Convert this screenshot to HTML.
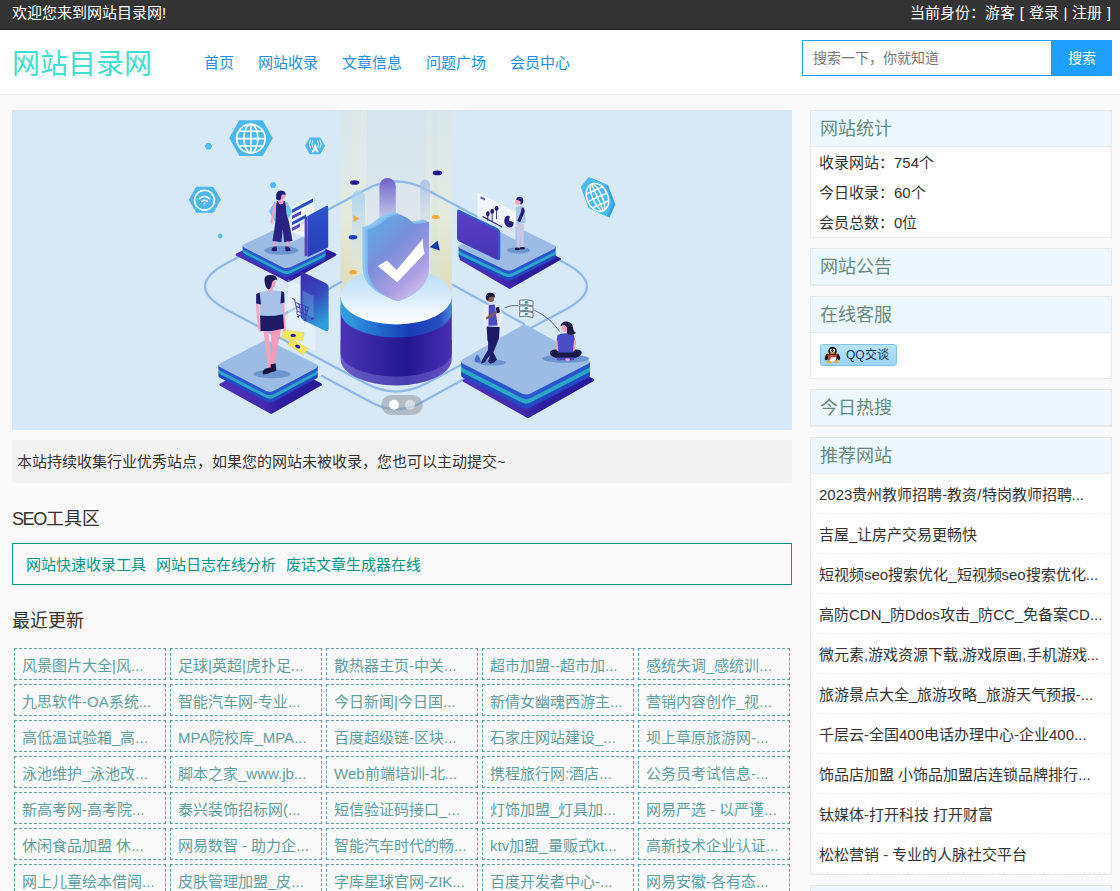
<!DOCTYPE html>
<html lang="zh-CN">
<head>
<meta charset="utf-8">
<title>网站目录网</title>
<style>
*{margin:0;padding:0;box-sizing:border-box;}
html,body{width:1120px;height:891px;overflow:hidden;}
body{font-family:"Liberation Sans",sans-serif;background:#fafafa;color:#333;font-size:15px;position:relative;}
a{text-decoration:none;color:inherit;}
ul{list-style:none;}
.topbar{position:absolute;left:0;top:0;width:1120px;height:30px;background:#333;border-bottom:1px solid #222;color:#fff;font-size:15px;line-height:26px;}
.topbar .l{position:absolute;left:12px;top:0;}
.topbar .r{position:absolute;right:9px;top:0;white-space:nowrap;word-spacing:0.6px;}
.header{position:absolute;left:0;top:30px;width:1120px;height:65px;background:#fff;border-bottom:1px solid #e8e8e8;}
.logo{position:absolute;left:12px;top:17px;font-size:28px;line-height:36px;color:#40e0d0;white-space:nowrap;}
.nav{position:absolute;left:192px;top:0;height:64px;white-space:nowrap;}
.nav a{display:inline-block;float:left;padding:0 12px;font-size:15px;line-height:66px;color:#2290e4;}
.search{position:absolute;left:802px;top:10px;width:310px;height:36px;}
.search .inp{position:absolute;left:0;top:0;width:250px;height:36px;border:1px solid #1e9fff;border-right:0;background:#fff;color:#777;font-size:14px;line-height:34px;padding-left:10px;}
.search .btn{position:absolute;left:249px;top:0;width:61px;height:36px;background:#1e9fff;color:#fff;font-size:14px;line-height:36px;text-align:center;}
.banner{position:absolute;left:12px;top:110px;width:780px;height:320px;background:#d7e8f7;overflow:hidden;}
.notice{position:absolute;left:12px;top:440px;width:780px;height:43px;background:#f2f2f2;border-radius:2px;font-size:15px;line-height:43px;padding-left:5px;color:#333;}
.h3{position:absolute;left:12px;font-size:18px;line-height:24px;color:#333;white-space:nowrap;}
.seo{position:absolute;left:12px;top:543px;width:780px;height:42px;border:1px solid #009688;font-size:15px;line-height:41px;color:#009688;padding-left:13px;white-space:nowrap;}
.seo a{margin-right:6px;}
.grid{position:absolute;left:12px;top:646px;width:784px;}
.grid a{float:left;width:152px;height:32px;margin:2px;border:1px dashed #5f9ea0;color:#5f9ea0;font-size:15px;line-height:33px;padding:0 7px;white-space:nowrap;overflow:hidden;}
.card{position:absolute;overflow:hidden;left:810px;width:302px;border:1px solid #e9e9e9;background:#fff;}
.card .hd{height:36px;background:#edf8fe;border-bottom:1px solid #e4ebef;font-size:18px;line-height:36px;color:#688a7c;padding-left:9px;}
.card .li{font-size:15px;line-height:30px;padding-left:8px;color:#333;white-space:nowrap;}
.card .rl{height:40px;line-height:42px;font-size:15px;padding-left:8px;color:#333;white-space:nowrap;overflow:hidden;border-bottom:1px dashed #eee;}
</style>
</head>
<body>
<div class="topbar"><span class="l">欢迎您来到网站目录网!</span><span class="r">当前身份：游客 [ 登录 | 注册 ]</span></div>
<div class="header">
  <div class="logo">网站目录网</div>
  <div class="nav"><a>首页</a><a>网站收录</a><a>文章信息</a><a>问题广场</a><a>会员中心</a></div>
  <div class="search"><div class="inp">搜索一下，你就知道</div><div class="btn">搜索</div></div>
</div>
<div class="banner" id="banner"><svg width="780" height="320" viewBox="12 110 780 320" style="display:block">
<defs>
<linearGradient id="beam" x1="0" y1="0" x2="0" y2="1"><stop offset="0" stop-color="#d9e7ec"/><stop offset="0.35" stop-color="#dfe9e8"/><stop offset="0.55" stop-color="#e4ebda"/><stop offset="0.78" stop-color="#e0e1c8"/><stop offset="1" stop-color="#dddcc0"/></linearGradient>
<linearGradient id="beam2" x1="0" y1="0" x2="0" y2="1"><stop offset="0" stop-color="#d5e5ee"/><stop offset="0.5" stop-color="#dce6ec"/><stop offset="1" stop-color="#e3e9ea"/></linearGradient>
<linearGradient id="pillP" x1="0" y1="0" x2="0" y2="1"><stop offset="0" stop-color="#6a5cc8" stop-opacity="0.95"/><stop offset="0.45" stop-color="#8f86d8" stop-opacity="0.7"/><stop offset="1" stop-color="#b9b4e6" stop-opacity="0.12"/></linearGradient>
<linearGradient id="pillB" x1="0" y1="0" x2="0" y2="1"><stop offset="0" stop-color="#a2cff0" stop-opacity="0.8"/><stop offset="1" stop-color="#c6dff5" stop-opacity="0.15"/></linearGradient>
<linearGradient id="pillG" x1="0" y1="0" x2="0" y2="1"><stop offset="0" stop-color="#a2bce3" stop-opacity="0.8"/><stop offset="1" stop-color="#cfdcf0" stop-opacity="0.05"/></linearGradient>
<linearGradient id="cylTop" x1="0" y1="0" x2="0" y2="1"><stop offset="0" stop-color="#b6dbf6"/><stop offset="0.45" stop-color="#d3e9fa"/><stop offset="0.8" stop-color="#f1f8fe"/><stop offset="1" stop-color="#ffffff"/></linearGradient>
<linearGradient id="cylBand" x1="0" y1="0" x2="1" y2="0"><stop offset="0" stop-color="#35a2e0"/><stop offset="0.3" stop-color="#2272d0"/><stop offset="0.62" stop-color="#183cb4"/><stop offset="0.9" stop-color="#2a4fc0"/><stop offset="1" stop-color="#4a8ad8"/></linearGradient>
<linearGradient id="cylBody" x1="0" y1="0" x2="1" y2="0"><stop offset="0" stop-color="#4a34b6"/><stop offset="0.6" stop-color="#23178f"/><stop offset="1" stop-color="#4a2fb4"/></linearGradient>
<linearGradient id="cylBase" x1="0" y1="0" x2="1" y2="0"><stop offset="0" stop-color="#6a5cc8"/><stop offset="0.6" stop-color="#4a3eb0"/><stop offset="1" stop-color="#6450c4"/></linearGradient>
<linearGradient id="shield" x1="0.1" y1="0" x2="0.75" y2="1"><stop offset="0" stop-color="#5cade4"/><stop offset="0.42" stop-color="#7a8ed9"/><stop offset="0.8" stop-color="#b0a0e4"/><stop offset="1" stop-color="#cfc2f0"/></linearGradient>
<linearGradient id="scrL" x1="0" y1="0" x2="0" y2="1"><stop offset="0" stop-color="#2b53cc"/><stop offset="1" stop-color="#2a3db8"/></linearGradient>
<linearGradient id="scrR" x1="0" y1="0" x2="0" y2="1"><stop offset="0" stop-color="#5a3fc2"/><stop offset="1" stop-color="#4636b4"/></linearGradient>
<linearGradient id="phone" x1="0" y1="0" x2="0.3" y2="1"><stop offset="0" stop-color="#3d29aa"/><stop offset="0.5" stop-color="#3648bc"/><stop offset="1" stop-color="#2f9ad6"/></linearGradient>
<linearGradient id="slabG" x1="0" y1="0" x2="1" y2="0"><stop offset="0" stop-color="#4f31b8"/><stop offset="0.45" stop-color="#4229ae"/><stop offset="0.6" stop-color="#2e1da0"/><stop offset="1" stop-color="#2a1a9a"/></linearGradient>
</defs>
<rect x="12" y="110" width="780" height="320" fill="#d7e8f7"/>
<rect x="340.5" y="110" width="111.5" height="195" fill="url(#beam)"/>
<rect x="367" y="110" width="58" height="195" fill="url(#beam2)"/>
<rect x="352" y="110" width="12" height="195" fill="#e9efe2" opacity="0.3"/>
<rect x="433" y="110" width="5" height="195" fill="#d2e6dc" opacity="0.4"/>
<rect x="362" y="110" width="5" height="195" fill="#e4ecf0" opacity="0.45"/>
<rect x="428" y="110" width="3" height="195" fill="#e4ecf0" opacity="0.4"/>
<path d="M227.2,309.9 Q183.0,286.5 227.2,263.1 L366.0,189.4 Q396.0,173.5 426.0,189.4 L564.8,263.1 Q609.0,286.5 564.8,309.9 L426.0,383.6 Q396.0,399.5 366.0,383.6 Z" fill="none" stroke="#8fb9e9" stroke-width="2.3" stroke-linecap="round"/>
<path d="M322,376 L372,402.8 Q398,416.5 424,401 L466,378" fill="none" stroke="#8fb9e9" stroke-width="2.3" stroke-linecap="round"/>
<path d="M262,327 L341,282" fill="none" stroke="#8fb9e9" stroke-width="2.3" stroke-linecap="round"/>
<path d="M453,285 L524,324" fill="none" stroke="#8fb9e9" stroke-width="2.3" stroke-linecap="round"/>
<path d="M352.0,262.0 V197.0 A6.5,6.5 0 0 1 365.0,197.0 V262.0 Z" fill="url(#pillB)"/>
<path d="M379.4,236.0 V186.2 A8.2,8.2 0 0 1 395.8,186.2 V236.0 Z" fill="url(#pillP)"/>
<path d="M420.2,238.0 V184.4 A4.9,4.9 0 0 1 430.0,184.4 V238.0 Z" fill="url(#pillG)"/>
<ellipse cx="354.6" cy="182.5" rx="4.6" ry="2.3" fill="#1f1592"/>
<ellipse cx="437.3" cy="172.9" rx="4.6" ry="2.3" fill="#1f1592"/>
<ellipse cx="353" cy="237.3" rx="4.3" ry="2.2" fill="#1c3fb2"/>
<ellipse cx="435.8" cy="217" rx="3.8" ry="2.1" fill="#f7a93a"/>
<ellipse cx="353" cy="272.2" rx="3.8" ry="2.1" fill="#f7a93a"/>
<polygon points="353.2,215.3 359.6,218.4 353.8,222" fill="#f5a445"/>
<polygon points="429.6,247.2 437.6,240.4 439.9,250.6" fill="#183cae"/>
<polygon points="236.8,254.6 284.0,231.0 335.2,254.6 288.5,281.0" fill="url(#slabG)" stroke="url(#slabG)" stroke-width="2.4" stroke-linejoin="round"/>
<path d="M242.6,251.3 L242.6,254.6 Q242.6,255.7 244.9,256.9 L281.9,275.7 Q286.4,278.0 290.9,275.9 L323.4,260.4 Q325.6,259.4 325.7,258.3 L325.7,255.0 Z" fill="#2447c2"/>
<path d="M242.6,248.5 L242.6,251.6 Q242.6,252.7 244.9,253.9 L281.9,272.7 Q286.4,275.0 290.9,272.9 L323.4,257.4 Q325.6,256.4 325.7,255.3 L325.7,252.2 Z" fill="#2ba7c8"/>
<path d="M242.6,245.5 L242.6,248.8 Q242.6,249.9 244.9,251.1 L281.9,269.9 Q286.4,272.2 290.9,270.1 L323.4,254.6 Q325.6,253.6 325.7,252.5 L325.7,249.2 Z" fill="#2a55cc"/>
<path d="M244.9,243.7 Q240.4,245.8 244.9,248.1 L281.9,266.9 Q286.4,269.2 290.9,267.1 L323.4,251.6 Q327.9,249.5 323.4,247.3 L286.5,228.7 Q282.0,226.5 277.5,228.6 Z" fill="#9cbce5"/>
<polygon points="290.5,207.5 313.5,195.5 313.5,231 290.5,243" fill="#ffffff" opacity="0.55"/>
<polygon points="292.0,209.5 313.0,198.6 313.0,202.0 292.0,212.9" fill="#2a4fc4"/>
<polygon points="292.0,215.7 301.0,211.0 301.0,214.4 292.0,219.1" fill="#5a44c0"/>
<polygon points="292.0,221.9 306.0,214.6 306.0,218.0 292.0,225.3" fill="#2a4fc4"/>
<polygon points="292.0,227.7 300.0,223.5 300.0,226.9 292.0,231.1" fill="#5a44c0"/>
<polygon points="304.6,217.5 307.6,216 307.6,255.5 304.6,256.5" fill="#5a3fc0"/>
<path d="M307.6,216 L325.5,206.2 Q328.2,205 328.2,208 L328.2,247.5 L307.6,257 Z" fill="url(#scrL)"/>
<ellipse cx="281.3" cy="250.3" rx="17" ry="4.4" fill="#6e95cf"/>
<polygon points="269,211.5 274.6,201.7 286.8,201.7 292.4,211.5 286.8,221.3 274.6,221.3" fill="#71c2f1"/>
<path d="M275.8,203.2 L273.4,213 L271.4,222.8" stroke="#f5a3bd" stroke-width="2.1" fill="none" stroke-linecap="round"/>
<rect x="279.6" y="197.6" width="2.8" height="4.4" fill="#f5a3bd"/>
<path d="M275,203.6 Q275.4,201 278,200.8 L284.2,200.8 Q286.2,201 286.6,203.6 L286.2,207 L275.4,207 Z" fill="#f5a3bd"/>
<path d="M276.9,201 L278.2,201 L279.2,204 L282.8,204 L283.7,201 L285,201 L285.8,206 L286.5,214 L289.2,223 L292.5,241 L284.2,242.2 L282.8,229 L281.4,242.2 L272.5,241 L275.3,223 L276,214 L276.1,206 Z" fill="#292382"/>
<rect x="274.3" y="241.5" width="2.2" height="6" fill="#f5a3bd"/><rect x="286.4" y="241.5" width="2.2" height="6" fill="#f5a3bd"/>
<path d="M271.4,250.6 Q271.4,247.6 274,246.4 L276.8,246.4 L277,250.8 Q274,252 271.4,250.6 Z" fill="#221c78"/><path d="M285.2,246.4 L288,246.4 Q290.6,247.8 290.8,250.6 Q288,252 285.4,250.8 Z" fill="#221c78"/>
<circle cx="282.4" cy="196.4" r="2.9" fill="#f5a3bd"/>
<path d="M276.2,198.4 Q275.2,190.6 281,190.5 Q286.2,190.7 285.5,195.4 Q283,193.6 281.3,195.8 Q281.6,199.8 279,200.5 Q276.7,200.4 276.2,198.4 Z" fill="#221c78"/>
<polygon points="460.6,259.0 510.0,234.0 559.6,259.0 509.6,287.6" fill="url(#slabG)" stroke="url(#slabG)" stroke-width="2.4" stroke-linejoin="round"/>
<path d="M458.6,252.9 L458.6,256.6 Q458.7,257.7 460.9,258.8 L504.3,279.4 Q508.8,281.6 513.3,279.4 L553.4,259.2 Q555.7,258.1 555.7,257.0 L555.7,253.3 Z" fill="#2447c2"/>
<path d="M458.6,249.7 L458.6,253.2 Q458.7,254.3 460.9,255.4 L504.3,276.0 Q508.8,278.2 513.3,276.0 L553.4,255.8 Q555.7,254.7 555.7,253.6 L555.7,250.1 Z" fill="#2ba7c8"/>
<path d="M458.6,246.3 L458.6,250.0 Q458.7,251.1 460.9,252.2 L504.3,272.8 Q508.8,275.0 513.3,272.8 L553.4,252.6 Q555.7,251.5 555.7,250.4 L555.7,246.7 Z" fill="#2a55cc"/>
<path d="M460.9,244.3 Q456.4,246.6 460.9,248.8 L504.3,269.4 Q508.8,271.6 513.3,269.4 L553.4,249.2 Q557.9,247.0 553.4,244.8 L510.0,223.7 Q505.5,221.5 501.0,223.8 Z" fill="#9cbce5"/>
<polygon points="477.5,192 515.5,211.8 515.5,240 477.5,220" fill="#ffffff" opacity="0.62"/>
<rect x="481" y="196.2" width="5" height="2.2" fill="#4a4aa0" opacity="0.8" transform="rotate(27 481 196.2)"/>
<ellipse cx="487.8" cy="213.8" rx="1.9" ry="2.5" fill="#221c78"/>
<path d="M487.8,215.8 V220.8" stroke="#221c78" stroke-width="0.9"/>
<ellipse cx="492.2" cy="211.2" rx="1.9" ry="2.5" fill="#221c78"/>
<path d="M492.2,213.2 V222.2" stroke="#221c78" stroke-width="0.9"/>
<ellipse cx="496.6" cy="208.2" rx="1.9" ry="2.5" fill="#221c78"/>
<path d="M496.6,210.2 V219.2" stroke="#221c78" stroke-width="0.9"/>
<path d="M482.5,216.5 L502,227" stroke="#221c78" stroke-width="1.2"/>
<path d="M504.2,221 Q505,214.5 509.8,216.2 L509,220.4 L513.6,222.2 Q513.8,228 509,227.4 Q504.6,226 504.2,221 Z" fill="#221c78"/>
<path d="M459.2,209.8 L497.6,228.3 Q500.3,229.8 500.3,232.6 L500.3,257.6 Q500.3,261.2 497.4,259.8 L459.2,241.2 Q457.2,240.2 457.2,238 L457.2,211 Q457.2,208.8 459.2,209.8 Z" fill="#2a5fd0"/>
<path d="M458.6,211.8 L496.2,230 Q498.6,231.2 498.6,234 L498.6,257.2 Q498.6,260.4 496,259.2 L458.6,241 Q457.2,240.2 457.2,238.6 L457.2,212.6 Q457.2,211 458.6,211.8 Z" fill="url(#scrR)"/>
<ellipse cx="518.6" cy="250.2" rx="11.6" ry="3.2" fill="#6e95cf"/>
<path d="M516.4,224 L524.2,224 L523.4,247.5 L520.6,247.5 L520.2,232 L519.4,247.5 L516.8,247.5 Z" fill="#c9c8e4"/>
<path d="M516,207 Q520,205.4 524.4,207.2 L525.6,222.6 L516.4,224.6 Z" fill="#a9c6ea"/>
<path d="M521.8,207.4 Q525,207.6 524.6,212 L520.2,222.2 L517.2,221 L520.6,213 Z" fill="#221c78"/>
<ellipse cx="517.4" cy="249" rx="2.6" ry="1.3" fill="#16143c"/><ellipse cx="522.4" cy="248.2" rx="2.6" ry="1.3" fill="#16143c"/>
<circle cx="518" cy="201.8" r="3" fill="#f5a3bd"/>
<path d="M516,199.4 Q517,196 521,197 Q524.4,198.4 523,202.6 Q522,205 520.4,204.4 Q521.4,200.6 518.6,200.4 Z" fill="#221c78"/>
<polygon points="288,279 315,292.5 315,351 288,337.5" fill="#ffffff" opacity="0.3"/>
<path d="M303.6,272.4 L325.6,283 Q328.6,284.6 328.6,288 L328.6,328 Q328.6,332.4 325.2,330.8 L303.2,320.2 Q300.6,318.8 300.6,316 L300.6,274.4 Q300.6,271 303.6,272.4 Z" fill="url(#phone)"/>
<path d="M302.6,290.6 L313.6,296 L313.6,318 L302.6,312.6 Z" fill="#6aa8e0" opacity="0.45"/>
<ellipse cx="312.4" cy="318.6" rx="1.6" ry="1.1" fill="#4a30b4"/>
<path d="M292.4,298.6 L294.6,299.6 L297.2,311 L306.6,315.6 L308.2,307.4 L295.4,302.6 M296.2,306.4 L307.4,311 M299,304 L300.6,312.6 M302.4,305.4 L303.6,314 M305.4,306.6 L306,315.2 M297.2,311 L296.8,314.2 L306.4,318.6" stroke="#4a32a8" stroke-width="0.9" fill="none"/>
<circle cx="298.2" cy="316.6" r="1.1" fill="#4a32a8"/><circle cx="305.2" cy="320" r="1.1" fill="#4a32a8"/>
<path d="M340.6,340.0 V359.0 A55.6,26.5 0 0 0 451.8,359.0 V340.0 Z" fill="url(#cylBase)"/>
<path d="M340.6,305.0 V352.5 A55.6,24 0 0 0 451.8,352.5 V305.0 Z" fill="url(#cylBody)"/>
<path d="M340.6,297.0 V311.5 A55.6,26 0 0 0 451.8,311.5 V297.0 Z" fill="url(#cylBand)"/>
<ellipse cx="396.2" cy="296.2" rx="55.6" ry="28.2" fill="url(#cylTop)"/>
<path d="M362.4,227.0 Q370.8,225.4 376.3,220.0 Q383.8,213.4 392.7,212.0 Q400.8,213.0 408.4,220.8 Q415.3,222.0 423.2,219.2 L428.9,222.8 L428.9,266 Q428.9,284 414,293.5 Q404,299.6 397.9,301 Q391,299.6 379.9,293.5 Q362.4,284 362.4,266 Z" fill="#8fc6f2"/>
<path d="M365.0,228.3 Q373.4,226.7 378.9,221.3 Q386.4,214.7 395.3,213.3 Q403.4,214.3 411.0,222.1 Q417.9,223.3 425.8,220.5 L428.9,222.8 L428.9,266 Q428.9,284 414,293.5 Q404,299.6 397.9,301 Q391,299.6 381.0,293.5 Q365.0,284 365.0,266 Z" fill="#84bbee"/>
<path d="M367.6,229.6 Q376.0,228.0 381.5,222.6 Q389.0,216.0 397.9,214.6 Q406.0,215.6 413.6,223.4 Q420.5,224.6 428.4,221.8 L428.9,222.8 L428.9,266 Q428.9,284 414,293.5 Q404,299.6 397.9,301 Q391,299.6 382.0,293.5 Q367.6,284 367.6,266 Z" fill="url(#shield)"/>
<polygon points="377.7,266 387.1,260.6 396.6,270 422.8,239 423.2,247 424.6,253.6 397.2,282.2" fill="#ffffff"/>
<polygon points="220.6,384.6 270.0,359.0 320.7,384.4 271.2,412.8" fill="url(#slabG)" stroke="url(#slabG)" stroke-width="2.4" stroke-linejoin="round"/>
<path d="M218.4,371.8 L218.4,375.9 Q218.4,377.0 220.6,378.2 L265.6,401.4 Q270.0,403.7 274.4,401.3 L315.6,379.1 Q317.8,377.9 317.8,376.7 L317.8,372.6 Z" fill="#2447c2"/>
<path d="M218.4,368.4 L218.4,372.1 Q218.4,373.2 220.6,374.4 L265.6,397.6 Q270.0,399.9 274.4,397.5 L315.6,375.3 Q317.8,374.1 317.8,372.9 L317.8,369.2 Z" fill="#2ba7c8"/>
<path d="M218.4,364.9 L218.4,368.7 Q218.4,369.8 220.6,371.0 L265.6,394.2 Q270.0,396.5 274.4,394.1 L315.6,371.9 Q317.8,370.7 317.8,369.5 L317.8,365.7 Z" fill="#2a55cc"/>
<path d="M220.7,362.9 Q216.2,365.2 220.6,367.5 L265.6,390.7 Q270.0,393.0 274.4,390.6 L315.6,368.4 Q320.0,366.0 315.5,363.8 L271.0,341.7 Q266.5,339.5 262.0,341.8 Z" fill="#9cbce5"/>
<polygon points="283.4,330.2 304.2,332.8 302.2,340.6 282.4,338.4" fill="#f3e85e" stroke="#d8cc48" stroke-width="0.5"/>
<ellipse cx="293.2" cy="335.4" rx="2.8" ry="1.6" fill="#2a2aa0"/>
<polygon points="291,338.8 308,348.4 303.6,354.6 287.6,344.6" fill="#f3e85e" stroke="#d8cc48" stroke-width="0.5"/>
<ellipse cx="297.8" cy="346.6" rx="2.8" ry="1.7" fill="#2a2aa0" transform="rotate(28 297.8 346.6)"/>
<ellipse cx="272" cy="374" rx="18.5" ry="4.3" fill="#6e95cf"/>
<path d="M263.6,329 L268,329 L270.6,352 L271.4,368.6 L268.2,369 L265.4,350 Z" fill="#f5a3bd"/>
<path d="M270,329 L281.4,328 L277.6,346 L274.4,366 L271.6,366 L272,346 Z" fill="#f19cb8"/>
<path d="M262.6,372.6 Q262.8,369.4 266.6,368.2 L271.8,367.2 L272.4,371.6 Q268,374.6 263.4,374.6 Z" fill="#16143c"/>
<path d="M270.6,364.2 L275.6,363.6 L276.4,370.2 Q273.6,372.6 271,371.6 Z" fill="#16143c"/>
<path d="M257.4,303 L258,318 L260,330.4" stroke="#f5a3bd" stroke-width="2.6" fill="none" stroke-linecap="round"/>
<path d="M282.8,302 L283.8,318 L284.6,330" stroke="#f5a3bd" stroke-width="2.6" fill="none" stroke-linecap="round"/>
<path d="M260,314.6 L283,313.4 L284.2,328.4 Q272,331.6 260.6,331 Z" fill="#1d1a66"/>
<path d="M259.4,292.4 Q270,289.4 281.6,291.2 L283,314.2 Q271,317 259.8,315.6 Z" fill="#a6c2e8"/>
<path d="M259.6,292.2 L256.2,294.2 L256.2,303.6 L261,304.6 Z" fill="#1d1a66"/><path d="M281.4,291 L284.2,292.6 L284.6,302.6 L280.4,303.6 Z" fill="#1d1a66"/>
<rect x="268.4" y="286" width="4.2" height="5.6" fill="#f5a3bd"/>
<circle cx="272.2" cy="283.4" r="3.6" fill="#f5a3bd"/>
<path d="M264.6,281.6 Q263.6,274.4 270,275 Q276,274.6 277.4,279.4 Q273.4,279.6 272,282.4 Q271.4,288.6 268.6,289.6 Q265,287.6 264.6,281.6 Z" fill="#1d1a5a"/>
<polygon points="463.8,380.7 528.0,347.0 593.2,380.0 528.0,416.9" fill="url(#slabG)" stroke="url(#slabG)" stroke-width="2.4" stroke-linejoin="round"/>
<path d="M461.1,370.4 L461.1,375.5 Q461.1,376.7 463.4,377.9 L521.7,407.4 Q526.2,409.7 530.6,407.4 L587.8,377.9 Q590.0,376.7 590.0,375.6 L590.0,370.5 Z" fill="#2447c2"/>
<path d="M461.1,365.8 L461.1,370.7 Q461.1,371.9 463.4,373.1 L521.7,402.6 Q526.2,404.9 530.6,402.6 L587.8,373.1 Q590.0,371.9 590.0,370.8 L590.0,365.9 Z" fill="#2ba7c8"/>
<path d="M461.1,361.2 L461.1,366.1 Q461.1,367.3 463.4,368.5 L521.7,398.0 Q526.2,400.3 530.6,398.0 L587.8,368.5 Q590.0,367.3 590.0,366.2 L590.0,361.3 Z" fill="#2a55cc"/>
<path d="M463.2,359.1 Q458.9,361.6 463.4,363.9 L521.7,393.4 Q526.2,395.7 530.6,393.4 L587.8,363.9 Q592.2,361.6 587.8,359.2 L528.8,326.3 Q524.4,323.9 520.1,326.4 Z" fill="#9cbce5"/>
<ellipse cx="492" cy="362.6" rx="14" ry="3" fill="#6e95cf"/>
<path d="M474.6,361.6 Q474.6,356.6 477.4,354.4 Q480.4,357 480.4,361.6 Q477.4,363.4 474.6,361.6 Z" fill="#4a6cc0"/>
<path d="M486.6,325 L499.8,324.4 L499,338 L493.4,352.6 L497,359.6 L494,362.4 L490.2,363.8 L488,361.6 L491,352 L487.4,340 Z" fill="#1d1a66"/>
<path d="M488.4,338 L492.6,352 L484.4,362.6 L481,363.4 L482,360 L488,350 Z" fill="#221e74"/>
<path d="M484.4,305.4 Q491,302.6 497.6,305 L503.8,316 L500.4,327 L486,326.6 L482,316.6 Z" fill="#ece9f6"/>
<path d="M488.8,305 L494.8,304.6 L497.6,325.4 L488.4,325.8 Z" fill="#4a4ac4"/>
<path d="M486.8,318.2 L496.4,312.4" stroke="#8a5a52" stroke-width="2.2" stroke-linecap="round"/>
<rect x="496.2" y="307.2" width="3.4" height="5.6" rx="0.8" fill="#1a1840" transform="rotate(-15 498 310)"/>
<circle cx="490.6" cy="298.4" r="3.5" fill="#8a5a52"/>
<path d="M485.8,296.6 Q486.4,292.2 491,292.8 Q495.4,293.4 494.8,297.4 Q492,295.8 489.4,297.2 Q488.6,300.4 487,300.6 Q485.6,299.2 485.8,296.6 Z" fill="#1a1840"/>
<path d="M504.4,307.8 Q511,304.6 518.6,305.6 M533.6,309.8 Q551,318 559.6,331.6" stroke="#3a3a5a" stroke-width="0.7" fill="none"/>
<path d="M519.6,300.2 Q526.4,299.0 533,301.0 L533,306.0 Q526.4,303.8 519.6,305.0 Z" fill="#e9eff3" stroke="#4a5f6e" stroke-width="0.8"/>
<ellipse cx="526.4" cy="302.4" rx="1.7" ry="1.3" fill="#3aa0a8"/>
<path d="M519.6,306.0 Q526.4,304.8 533,306.8 L533,311.8 Q526.4,309.6 519.6,310.8 Z" fill="#e9eff3" stroke="#4a5f6e" stroke-width="0.8"/>
<ellipse cx="526.4" cy="308.2" rx="1.7" ry="1.3" fill="#3aa0a8"/>
<path d="M519.6,311.8 Q526.4,310.6 533,312.6 L533,317.6 Q526.4,315.4 519.6,316.6 Z" fill="#e9eff3" stroke="#4a5f6e" stroke-width="0.8"/>
<ellipse cx="526.4" cy="314.0" rx="1.7" ry="1.3" fill="#3aa0a8"/>
<ellipse cx="565.7" cy="358.6" rx="23.5" ry="4.2" fill="#6e95cf"/>
<path d="M549.6,352.6 Q551,349 557,349.6 L574.6,349.6 Q581,349 581.8,352.8 Q581,357.6 572,358.6 Q565.8,360.4 559.6,358.6 Q550.6,357.6 549.6,352.6 Z" fill="#1a1846"/>
<path d="M556.6,357.4 L574.6,357.4 L574,360.2 L557.2,360.2 Z" fill="#4a4ac4"/>
<ellipse cx="567.6" cy="359.6" rx="2.4" ry="1.3" fill="#f5a3bd"/>
<path d="M557.6,335 Q565.6,331.6 573.8,335 L575.6,343 L573.8,352.4 L558,352.4 L556,343 Z" fill="#4a4cc6"/>
<path d="M556.6,341 L557.4,350 M574.8,341 L574,350" stroke="#f5a3bd" stroke-width="1.8" stroke-linecap="round"/>
<circle cx="564.6" cy="328.6" r="3.4" fill="#f5a3bd"/>
<path d="M560.4,326.6 Q561.4,321 567,321.6 Q572.6,322.4 573,328 Q573.4,331.6 576,333 Q572.6,336 568.6,334.6 Q566.4,333.6 567,330.4 Q567.6,326 564.4,325.2 Q561.8,325.2 560.4,326.6 Z" fill="#1a1846"/>
<polygon points="229.2,138.1 239.3,120.3 262.7,120.3 272.8,138.1 262.7,155.9 239.3,155.9" fill="#4db8ee"/>
<g fill="none" stroke="#fff" stroke-width="1.6"><circle cx="250.9" cy="138.6" r="14.3"/><ellipse cx="250.9" cy="138.6" rx="7" ry="14.3"/><path d="M250.9,124.3 V152.9 M236.6,138.6 H265.2 M238.8,131.2 H263 M238.8,146 H263"/></g>
<polygon points="305.0,145.8 309.7,137.4 320.3,137.4 325.0,145.8 320.3,154.2 309.7,154.2" fill="#4db8ee"/>
<polygon points="315.2,143.4 318.6,152.3 316.7,152.3 315.2,149.8 313.7,152.3 311.8,152.3" fill="#fff"/>
<g fill="none" stroke="#fff" stroke-width="0.85" stroke-linecap="round"><path d="M312.6,147 Q310.9,143.9 312.6,140.8 M317.8,147 Q319.5,143.9 317.8,140.8 M310.4,147.8 Q307.9,143.9 310.4,140 M320,147.8 Q322.5,143.9 320,140"/></g>
<polygon points="188.7,199.7 196.2,186.7 213.4,186.7 220.9,199.7 213.4,212.7 196.2,212.7" fill="#4db8ee"/>
<g fill="none" stroke="#fff" stroke-linecap="round"><circle cx="204.5" cy="200.2" r="9.9" stroke-width="1.6"/><path d="M199.6,198.6 Q204.5,194.4 209.4,198.6" stroke-width="1.5"/><path d="M201.8,201.4 Q204.5,199.2 207.2,201.4" stroke-width="1.5"/></g><circle cx="204.5" cy="203.6" r="1" fill="#fff"/>
<polygon points="204.7,146.2 206.6,143.0 210.2,143.0 212.1,146.2 210.2,149.4 206.6,149.4" fill="#52bdf0"/>
<polygon points="269.7,185.1 271.4,182.2 274.8,182.2 276.5,185.1 274.8,188.0 271.4,188.0" fill="#52bdf0"/>
<polygon points="217.7,236.0 218.9,233.8 221.4,233.8 222.7,236.0 221.4,238.2 218.9,238.2" fill="#52bdf0"/>
<polygon points="583.6,188 591.3,178 608.1,185.2 615.4,204.6 609.6,217.6 591.3,209.2" fill="#3a9fe2"/>
<polygon points="580.8,186.9 588.5,176.9 605.3,184.1 612.5,203.5 606.7,216.4 588.5,208" fill="#4cb9ef"/>
<g transform="translate(597.4,197.4) rotate(-24)" fill="none" stroke="#fff" stroke-width="1.4"><ellipse cx="0" cy="0" rx="10.4" ry="14.6"/><ellipse cx="0" cy="0" rx="4.6" ry="14.6"/><path d="M0,-14.6 V14.6 M-10.4,0 H10.4 M-8.8,-7.6 H8.8 M-8.8,7.6 H8.8"/></g>
<rect x="381.2" y="395" width="41.6" height="20" rx="10" fill="#8d8f94" opacity="0.5"/>
<circle cx="394" cy="404.8" r="5" fill="#ffffff"/>
<circle cx="410" cy="404.8" r="5" fill="#ffffff" opacity="0.5"/>
</svg></div>
<div class="notice">本站持续收集行业优秀站点，如果您的网站未被收录，您也可以主动提交~</div>
<div class="h3" style="top:507px"><span style="letter-spacing:-1.4px">SEO</span>工具区</div>
<div class="seo"><a>网站快速收录工具</a> <a>网站日志在线分析</a> <a>废话文章生成器在线</a></div>
<div class="h3" style="top:609px">最近更新</div>
<div class="grid">
<a>风景图片大全|风...</a><a>足球|英超|虎扑足...</a><a>散热器主页-中关...</a><a>超市加盟--超市加...</a><a>感统失调_感统训...</a>
<a>九思软件-OA系统...</a><a>智能汽车网-专业...</a><a>今日新闻|今日国...</a><a>新倩女幽魂西游主...</a><a>营销内容创作_视...</a>
<a>高低温试验箱_高...</a><a>MPA院校库_MPA...</a><a>百度超级链-区块...</a><a>石家庄网站建设_...</a><a>坝上草原旅游网-...</a>
<a>泳池维护_泳池改...</a><a>脚本之家_www.jb...</a><a>Web前端培训-北...</a><a>携程旅行网:酒店...</a><a>公务员考试信息-...</a>
<a>新高考网-高考院...</a><a>泰兴装饰招标网(...</a><a>短信验证码接口_...</a><a>灯饰加盟_灯具加...</a><a>网易严选 - 以严谨...</a>
<a>休闲食品加盟 休...</a><a>网易数智 - 助力企...</a><a>智能汽车时代的畅...</a><a>ktv加盟_量贩式kt...</a><a>高新技术企业认证...</a>
<a>网上儿童绘本借阅...</a><a>皮肤管理加盟_皮...</a><a>字库星球官网-ZIK...</a><a>百度开发者中心-...</a><a>网易安徽-各有态...</a>
</div>

<div class="card" style="top:110px;height:128px;"><div class="hd">网站统计</div>
  <div class="li" style="margin-top:1px">收录网站：754个</div><div class="li">今日收录：60个</div><div class="li">会员总数：0位</div></div>
<div class="card" style="top:248px;height:38px;"><div class="hd">网站公告</div></div>
<div class="card" style="top:296px;height:83px;"><div class="hd">在线客服</div>
  <svg width="77" height="22" viewBox="0 0 77 22" style="position:absolute;left:9px;top:47px;">
<defs><linearGradient id="qg" x1="0" y1="0" x2="0" y2="1"><stop offset="0" stop-color="#b9e3f9"/><stop offset="1" stop-color="#9cd3f3"/></linearGradient></defs>
<rect x="0.5" y="0.5" width="76" height="21" rx="2.5" fill="url(#qg)" stroke="#86c1e6"/>
<g transform="translate(4.5,2.5)">
<ellipse cx="2.2" cy="10.5" rx="1.6" ry="3.4" fill="#151515" transform="rotate(18 2.2 10.5)"/>
<ellipse cx="13.8" cy="10.5" rx="1.6" ry="3.4" fill="#151515" transform="rotate(-18 13.8 10.5)"/>
<ellipse cx="4.6" cy="15.2" rx="2.6" ry="1.2" fill="#f5a81c"/>
<ellipse cx="11.4" cy="15.2" rx="2.6" ry="1.2" fill="#f5a81c"/>
<ellipse cx="8" cy="10.6" rx="5.4" ry="4.9" fill="#151515"/>
<ellipse cx="8" cy="11.4" rx="3.9" ry="3.9" fill="#fff"/>
<ellipse cx="8" cy="4.6" rx="4.3" ry="4.4" fill="#151515"/>
<ellipse cx="6.5" cy="3.9" rx="1.1" ry="1.5" fill="#fff"/>
<ellipse cx="9.5" cy="3.9" rx="1.1" ry="1.5" fill="#fff"/>
<circle cx="6.8" cy="4.1" r="0.55" fill="#151515"/>
<circle cx="9.2" cy="4.1" r="0.55" fill="#151515"/>
<ellipse cx="8" cy="6.4" rx="2.4" ry="0.9" fill="#f6b01e"/>
<path d="M3 7.6 Q8 10.2 13 7.6 L13.2 9.4 Q8 12 2.8 9.4 Z" fill="#e0301e"/>
<path d="M4.2 9.6 L6.2 10.3 L5.8 13.4 L4 12.9 Z" fill="#e0301e"/>
</g>
<text x="26" y="15.3" font-family="'Liberation Sans',sans-serif" font-size="12" fill="#0b3550">QQ交谈</text>
</svg></div>
<div class="card" style="top:389px;height:38px;"><div class="hd">今日热搜</div></div>
<div class="card" style="top:437px;height:438px;"><div class="hd">推荐网站</div>
  <div class="rl">2023贵州教师招聘-教资/特岗教师招聘...</div>
  <div class="rl">吉屋_让房产交易更畅快</div>
  <div class="rl">短视频seo搜索优化_短视频seo搜索优化...</div>
  <div class="rl">高防CDN_防Ddos攻击_防CC_免备案CD...</div>
  <div class="rl">微元素,游戏资源下载,游戏原画,手机游戏...</div>
  <div class="rl">旅游景点大全_旅游攻略_旅游天气预报-...</div>
  <div class="rl">千层云-全国400电话办理中心-企业400...</div>
  <div class="rl">饰品店加盟 小饰品加盟店连锁品牌排行...</div>
  <div class="rl">钛媒体-打开科技 打开财富</div>
  <div class="rl">松松营销 - 专业的人脉社交平台</div>
</div>
<div class="card" style="top:885px;height:40px;"><div class="hd"></div></div>
</body>
</html>
